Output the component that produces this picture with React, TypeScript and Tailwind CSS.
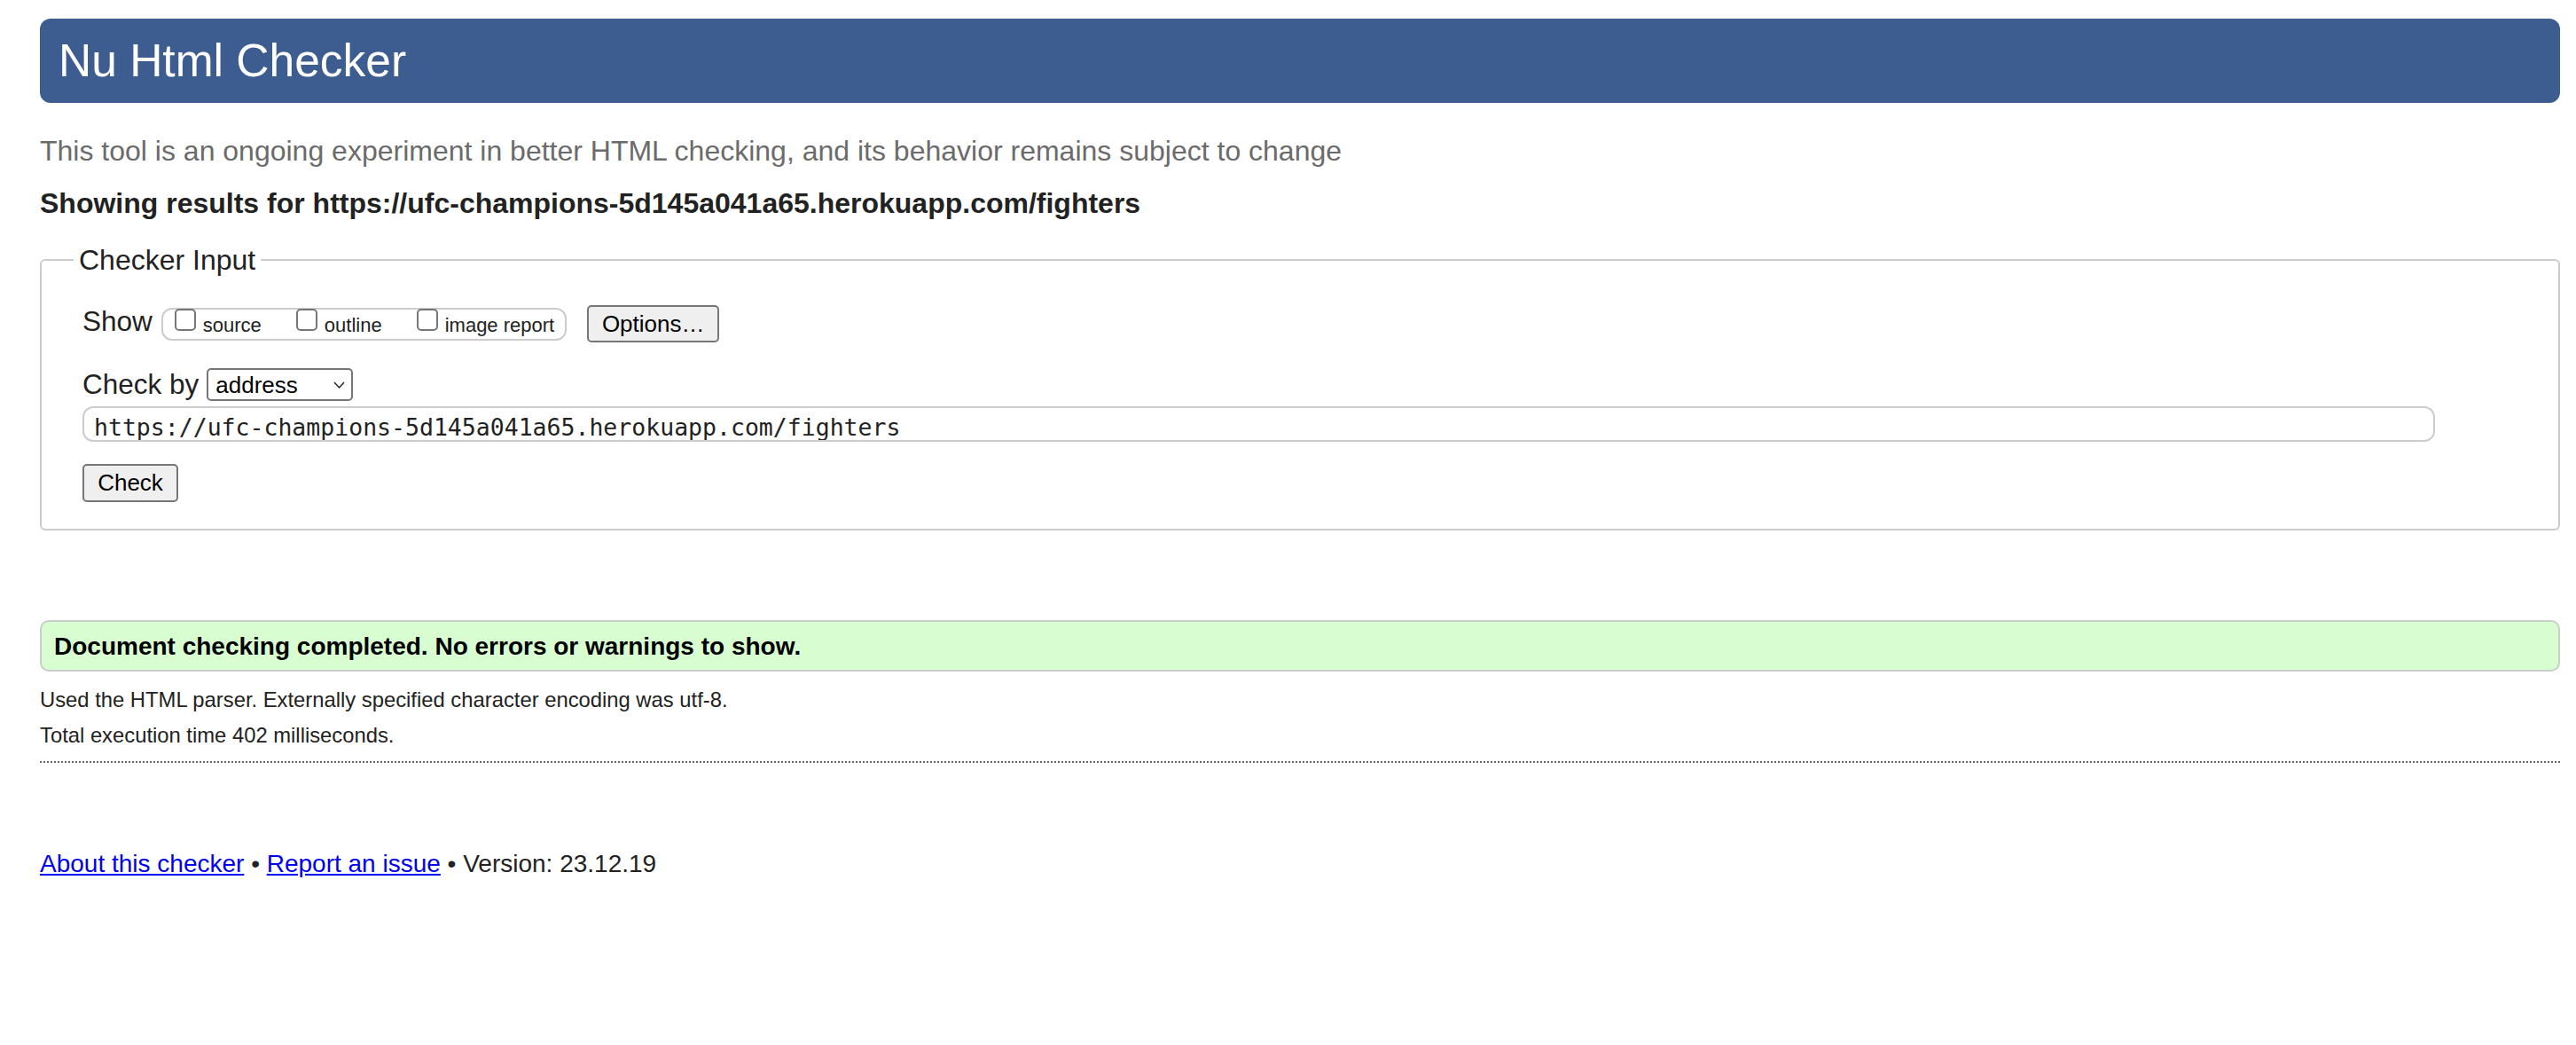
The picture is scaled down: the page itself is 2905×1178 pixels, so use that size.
import React from "react";

const showOptions = ["source", "outline", "image report"];

export default function App() {
  return (
    <div className="min-h-screen bg-white pl-[45px] pr-[18px] pt-[21px] font-['Liberation_Sans',Arial,sans-serif] text-[#222]">
      <header className="flex h-[95px] items-center rounded-[12px] bg-[#3d5c8f] pl-[21px]">
        <h1 className="text-[51.5px] font-normal leading-none text-white">Nu Html Checker</h1>
      </header>

      <p className="mt-[36px] text-[32px] leading-[37px] text-[#6b6b6b]">
        This tool is an ongoing experiment in better HTML checking, and its behavior remains subject to change
      </p>

      <p className="mt-[22px] text-[32px] font-bold leading-[36px]">
        Showing results for https://ufc-champions-5d145a041a65.herokuapp.com/fighters
      </p>

      <fieldset className="mt-[28px] rounded-[6px] border-2 border-[#ccc] pb-[30px] pl-[46px] pt-[33px]">
        <legend className="ml-[-10px] px-[6px] text-[32px] leading-[36px]">Checker Input</legend>

        {/* show row */}
        <div className="flex h-[42px] items-start">
          <span className="mt-[3px] text-[31.5px] leading-none">Show</span>
          <div className="ml-[10px] mt-[3px] flex h-[37px] items-start gap-[39px] rounded-[12px] border-2 border-[#ccc] pl-[13px] pr-[12px]">
            {showOptions.map((opt) => (
              <label key={opt} className="flex items-start gap-[8px]">
                <input
                  type="checkbox"
                  className="mt-[-1px] h-[25px] w-[24px] appearance-none rounded-[5px] border-2 border-[#767676] bg-white"
                />
                <span className="mt-[5px] text-[22px] leading-[25px]">{opt}</span>
              </label>
            ))}
          </div>
          <button className="ml-[23px] h-[42px] w-[149px] rounded-[5px] border-2 border-[#767676] bg-[#efefef] text-[26px] leading-[38px] text-black">
            Options…
          </button>
        </div>

        {/* check by row */}
        <div className="mt-[29px] flex h-[37px] items-center">
          <span className="text-[31.5px] leading-none">Check by</span>
          <div className="relative ml-[9px] h-[37px] w-[165px]">
            <select
              defaultValue="address"
              className="h-full w-full appearance-none rounded-[5px] border-2 border-[#767676] bg-white pl-[8px] text-[26px] leading-none text-black"
            >
              <option value="address">address</option>
              <option value="file">file upload</option>
              <option value="text">text input</option>
            </select>
            <svg
              className="pointer-events-none absolute right-[9px] top-1/2 h-[8px] w-[13px] -translate-y-1/2"
              viewBox="0 0 13 8"
              fill="none"
              stroke="#222"
              strokeWidth={1.4}
            >
              <path d="M1 1l5.5 6L12 1" />
            </svg>
          </div>
        </div>

        <input
          readOnly
          value="https://ufc-champions-5d145a041a65.herokuapp.com/fighters"
          className="mt-[6px] block h-[40px] w-[2653px] rounded-[12px] border-2 border-[#ccc] pl-[11px] pt-[7px] font-['DejaVu_Sans_Mono',monospace] text-[26.5px] text-[#222] outline-none"
        />

        <button className="mt-[25px] block h-[43px] w-[108px] rounded-[5px] border-2 border-[#767676] bg-[#efefef] text-[26px] leading-[39px] text-black">
          Check
        </button>
      </fieldset>

      <div className="mt-[101px] h-[58px] rounded-[10px] border-2 border-[#ccc] bg-[#d8fdd1] pl-[14px] pt-[14px]">
        <p className="text-[28px] font-bold leading-none text-black">
          Document checking completed. No errors or warnings to show.
        </p>
      </div>

      <p className="mt-[20px] text-[23.8px] leading-none">
        Used the HTML parser. Externally specified character encoding was utf-8.
      </p>
      <p className="mt-[16px] text-[23.8px] leading-none">Total execution time 402 milliseconds.</p>

      <div className="mt-[17px] h-[2px] bg-[repeating-linear-gradient(90deg,#666_0px,#666_2px,transparent_2px,transparent_4px)]" />

      <p className="mt-[100px] text-[28px] leading-none">
        <a href="#" className="text-[#0000ee] underline">
          About this checker
        </a>{" "}
        •{" "}
        <a href="#" className="text-[#0000ee] underline">
          Report an issue
        </a>{" "}
        • Version: 23.12.19
      </p>
    </div>
  );
}
